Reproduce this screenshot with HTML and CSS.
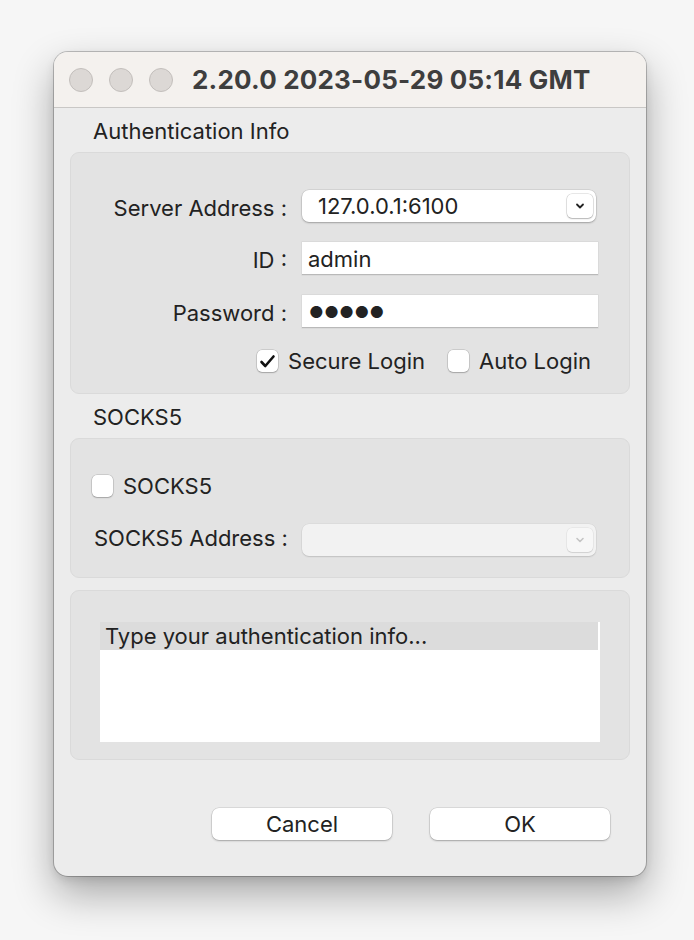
FILE: index.html
```html
<!DOCTYPE html>
<html>
<head>
<meta charset="utf-8">
<link rel="stylesheet" href="styles.css">
</head>
<body>
<div class="window">
  <div class="titlebar">
    <div class="lights">
      <span class="light"></span><span class="light"></span><span class="light"></span>
    </div>
    <div class="title">2.20.0 2023-05-29 05:14 GMT</div>
  </div>
  <div class="content">
    <div class="section-label">Authentication Info</div>
    <div class="group group-auth">
      <div class="form">
        <div class="label">Server Address :</div>
        <div class="combo">
          <span class="combo-text">127.0.0.1:6100</span>
          <span class="combo-btn"><svg width="10" height="7" viewBox="0 0 10 7"><path d="M2 1.5 L5 4.5 L8 1.5" fill="none" stroke="#222" stroke-width="1.8" stroke-linecap="round" stroke-linejoin="round"/></svg></span>
        </div>
        <div class="label">ID :</div>
        <div class="field">admin</div>
        <div class="label">Password :</div>
        <div class="field dots">●●●●●</div>
      </div>
      <div class="checks">
        <label class="check"><span class="box"><svg width="17" height="15" viewBox="0 0 17 15"><path d="M2.5 8 L6.3 12 L14.5 2.5" fill="none" stroke="#111" stroke-width="2.6" stroke-linecap="round" stroke-linejoin="round"/></svg></span>Secure Login</label>
        <label class="check"><span class="box"></span>Auto Login</label>
      </div>
    </div>
    <div class="section-label">SOCKS5</div>
    <div class="group group-socks">
      <label class="check"><span class="box"></span>SOCKS5</label>
      <div class="socks-row">
        <div class="label-left">SOCKS5 Address :</div>
        <div class="combo disabled">
          <span class="combo-text"></span>
          <span class="combo-btn"><svg width="10" height="7" viewBox="0 0 10 7"><path d="M2 1.5 L5 4.5 L8 1.5" fill="none" stroke="#c4c4c4" stroke-width="1.6" stroke-linecap="round" stroke-linejoin="round"/></svg></span>
        </div>
      </div>
    </div>
    <div class="group group-list">
      <div class="list">
        <div class="list-item selected">Type your authentication info...</div>
      </div>
    </div>
    <div class="buttons">
      <button class="btn">Cancel</button>
      <button class="btn">OK</button>
    </div>
  </div>
</div>
</body>
</html>
```
FILE: styles.css
```css
* { box-sizing: border-box; }
html, body { margin: 0; padding: 0; }
body {
  width: 694px;
  height: 940px;
  background: #f6f6f6;
  font-family: Inter, "Liberation Sans", sans-serif;
  color: #222;
  overflow: hidden;
  padding: 52px 0 0 54px;
}
.window {
  width: 592px;
  height: 824px;
  border-radius: 14px;
  background: #ececec;
  box-shadow: 0 0 0 1px rgba(0,0,0,0.22), 0 18px 40px rgba(0,0,0,0.32), 0 4px 10px rgba(0,0,0,0.1);
  overflow: hidden;
  display: flex;
  flex-direction: column;
}
.titlebar {
  height: 56px;
  background: #f4f1ee;
  border-bottom: 1px solid #c9c7c5;
  display: flex;
  align-items: center;
  padding-left: 15px;
  flex-shrink: 0;
}
.lights { display: flex; gap: 16px; }
.light {
  width: 24px; height: 24px;
  border-radius: 50%;
  background: #dcd8d5;
  border: 1px solid #c3bfbc;
}
.title {
  margin-left: 19px;
  font-size: 26px;
  font-weight: 700;
  color: #3e3e3e;
  letter-spacing: 0.2px;
}
.content {
  padding: 0 16px 0 16px;
  display: flex;
  flex-direction: column;
}
.section-label {
  font-size: 22px;
  padding-left: 23px;
  height: 44px;
  line-height: 46px;
  color: #222;
}
.group {
  background: #e3e3e3;
  border: 1px solid #dadada;
  border-radius: 9px;
}
.group-auth { height: 242px; padding-top: 37px; }
.form {
  display: grid;
  grid-template-columns: 216px 296px;
  column-gap: 15px;
  row-gap: 20px;
  align-items: center;
}
.label {
  text-align: right;
  font-size: 22px;
  padding-top: 3px;
}
.combo {
  height: 32px;
  background: #fff;
  border-radius: 7px;
  box-shadow: 0 0 0 0.5px rgba(0,0,0,0.12), 0 1px 2px rgba(0,0,0,0.25);
  display: flex;
  align-items: center;
  justify-content: space-between;
  padding: 0 3px 0 16px;
  font-size: 22px;
  width: 294px;
}
.combo-btn {
  width: 26px; height: 24px;
  border-radius: 5px;
  background: #fff;
  box-shadow: 0 0 0 0.5px rgba(0,0,0,0.18), 0 1px 1.5px rgba(0,0,0,0.22);
  display: flex; align-items: center; justify-content: center;
}
.combo.disabled { background: #f2f2f2; box-shadow: 0 0 0 0.5px rgba(0,0,0,0.06), 0 1px 1.5px rgba(0,0,0,0.12); }
.combo.disabled .combo-btn { background: #f7f7f7; box-shadow: 0 0 0 0.5px rgba(0,0,0,0.08), 0 1px 1px rgba(0,0,0,0.1); }
.field {
  height: 33px;
  background: #fff;
  border-bottom: 1px solid #b9b9b9;
  box-shadow: 0 0 0 0.5px rgba(0,0,0,0.08);
  font-size: 22px;
  padding-left: 6px;
  padding-top: 2px;
  display: flex;
  align-items: center;
}
.field.dots { font-size: 16px; letter-spacing: 0.5px; padding-left: 7px; }
.checks {
  display: flex;
  justify-content: flex-end;
  gap: 23px;
  padding-right: 38px;
  margin-top: 20px;
}
.check {
  display: flex;
  align-items: center;
  gap: 10px;
  font-size: 22px;
}
.box {
  width: 21px; height: 22px;
  background: #fff;
  border-radius: 5px;
  box-shadow: 0 0 0 0.5px rgba(0,0,0,0.2), 0 1px 1.5px rgba(0,0,0,0.2);
  display: flex; align-items: center; justify-content: center;
}
.group-socks { height: 140px; padding: 34px 0 0 21px; }
.socks-row {
  display: flex;
  align-items: center;
  margin-top: 25px;
  gap: 15px;
}
.label-left { font-size: 22px; width: 195px; padding-left: 2px; padding-bottom: 4px; white-space: nowrap; }
.group-list { height: 170px; margin-top: 12px; padding: 31px 29px 0 29px; }
.list {
  background: #fff;
  height: 120px;
  width: 500px;
}
.list-item.selected {
  background: #dcdcdc;
  height: 28px;
  width: 498px;
  font-size: 22px;
  padding-left: 5px;
  line-height: 28px;
}
.buttons {
  display: flex;
  justify-content: flex-end;
  gap: 38px;
  padding-right: 20px;
  margin-top: 48px;
}
.btn {
  width: 180px;
  height: 32px;
  background: #fff;
  border: none;
  border-radius: 7px;
  box-shadow: 0 0 0 0.5px rgba(0,0,0,0.14), 0 1px 2px rgba(0,0,0,0.25);
  font-family: Inter, "Liberation Sans", sans-serif;
  font-size: 22px;
  color: #222;
}
```
